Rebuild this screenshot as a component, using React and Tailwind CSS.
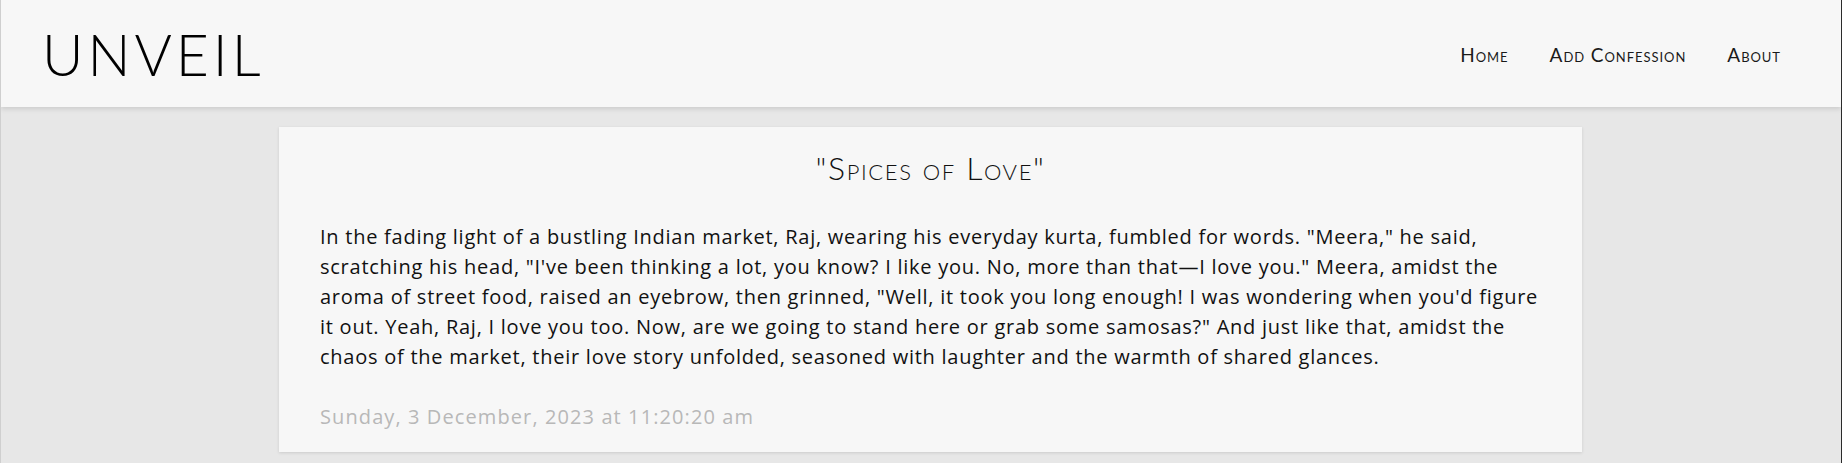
import React from "react";

const lines = [
  'In the fading light of a bustling Indian market, Raj, wearing his everyday kurta, fumbled for words. "Meera," he said,',
  'scratching his head, "I\'ve been thinking a lot, you know? I like you. No, more than that\u2014I love you." Meera, amidst the',
  "aroma of street food, raised an eyebrow, then grinned, \"Well, it took you long enough! I was wondering when you'd figure",
  'it out. Yeah, Raj, I love you too. Now, are we going to stand here or grab some samosas?" And just like that, amidst the',
  "chaos of the market, their love story unfolded, seasoned with laughter and the warmth of shared glances.",
];

const navItems = ["Home", "Add Confession", "About"];

export default function App() {
  return (
    <div className="h-[463px] overflow-hidden bg-[#e7e7e7] border-l border-l-[#cfcfcf] border-r border-r-[#2b2b2b]">
      <header className="h-[107px] bg-[#f7f7f7] shadow-[0_2px_5px_rgba(0,0,0,0.12)] flex items-center justify-between pl-[41px] pr-[60px] relative z-10">
        <h1 className="text-[57px] leading-none font-light tracking-[0.07em] text-black font-['Lato',sans-serif] pt-[2px]">
          UNVEIL
        </h1>
        <nav className="flex items-center gap-[41px] pt-[4px]">
          {navItems.map((n) => (
            <a
              key={n}
              href="#"
              className="text-[19px] font-normal [font-variant:small-caps] tracking-[0.05em] text-[#1a1a1a] font-['Lato',sans-serif]"
            >
              {n}
            </a>
          ))}
        </nav>
      </header>

      <main className="pt-[20px]">
        <article className="ml-[278px] w-[1303px] bg-[#f7f7f7] shadow-[0_1px_3px_rgba(0,0,0,0.12)] px-[41px] pt-[21px] pb-[20px]">
          <h2 className="text-center text-[32px] leading-[40px] font-light [font-variant:small-caps] tracking-[0.05em] text-[#111] font-['Lato',sans-serif]">
            "Spices of Love"
          </h2>
          <p className="mt-[34px] text-[20px] leading-[30px] tracking-[0.75px] text-[#111] font-['Open_Sans',sans-serif]">
            {lines.map((l, i) => (
              <span key={i} className="block whitespace-nowrap">
                {l}
              </span>
            ))}
          </p>
          <p className="mt-[30px] text-[20px] leading-[30px] tracking-[1.1px] text-[#b8b8b8] font-['Open_Sans',sans-serif]">
            Sunday, 3 December, 2023 at 11:20:20 am
          </p>
        </article>
      </main>
    </div>
  );
}
